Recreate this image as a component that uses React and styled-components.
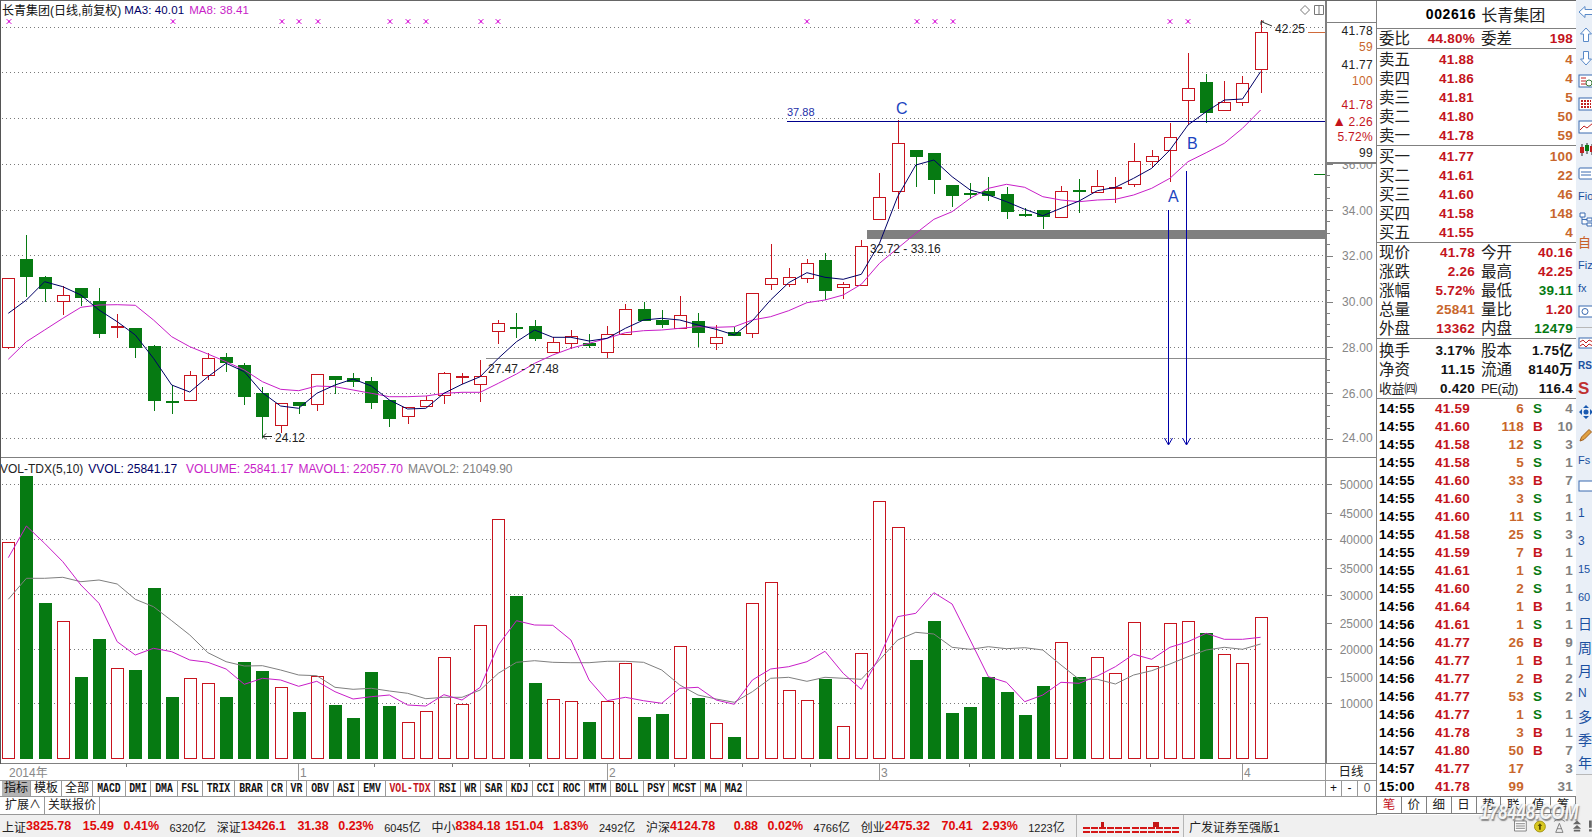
import styled, { createGlobalStyle } from "styled-components";

const SANS = `"Liberation Sans", "Noto Sans CJK SC", sans-serif`;

const GlobalStyle = createGlobalStyle`
  html, body {
    margin: 0;
    background: #fff;
    overflow: hidden;
  }
  * {
    box-sizing: border-box;
  }
`;

const RED = "#c4141c";
const ORANGE = "#c8662c";
const GREEN = "#067a12";
const NAVY = "#000066";
const MAGENTA = "#c81ec8";
const GRAY = "#808080";

const toY = (base, list) => list.map((v) => base + v / 3);
const barX = (i) => 8.3 + 18.15 * i;

// [type, wick top, body top, body bottom, wick bottom], read off the picture in 3x units
const scaleCandles = (base, rows) =>
  rows.map(([type, wt, bt, bb, wb]) => ({
    type,
    wt: base + wt / 3,
    bt: base + bt / 3,
    bb: base + bb / 3,
    wb: base + wb / 3,
  }));

const candles = [
  ...scaleCandles(230, [
    ["r", 145, 145, 353, 356], ["g", 15, 87, 137, 200], ["g", 138, 141, 173, 215],
    ["r", 168, 196, 214, 255], ["g", 174, 174, 200, 228], ["g", 174, 213, 308, 323],
    ["r", 252, 288, 292, 323], ["g", 294, 294, 351, 383], ["g", 345, 348, 509, 543],
    ["g", 465, 513, 515, 551], ["r", 424, 436, 512, 512], ["r", 370, 385, 437, 450],
    ["g", 370, 381, 396, 425], ["g", 400, 405, 497, 525], ["g", 472, 489, 557, 625],
    ["r", 520, 520, 586, 608], ["g", 515, 516, 524, 551], ["r", 433, 433, 523, 542],
    ["g", 438, 438, 446, 493], ["g", 430, 445, 453, 470], ["g", 441, 453, 515, 536],
    ["g", 510, 510, 563, 590], ["r", 530, 532, 559, 581], ["r", 497, 511, 529, 530],
    ["r", 425, 430, 496, 521], ["r", 430, 438, 442, 462], ["r", 390, 439, 463, 515],
    ["r", 270, 280, 304, 341], ["g", 250, 291, 293, 325],
  ]),
  ...scaleCandles(100, [
    ["g", 660, 678, 714, 722], ["r", 710, 727, 758, 758], ["r", 690, 707, 728, 748],
    ["g", 703, 730, 735, 745], ["r", 678, 703, 757, 775], ["r", 613, 628, 704, 704],
    ["g", 605, 628, 660, 660], ["g", 630, 660, 671, 685], ["r", 588, 646, 686, 688],
    ["g", 640, 663, 695, 742], ["r", 675, 710, 727, 750], ["g", 680, 696, 704, 707],
    ["r", 580, 580, 700, 714], ["r", 432, 535, 553, 570], ["r", 505, 530, 550, 560],
    ["r", 478, 490, 536, 550], ["g", 460, 481, 572, 600], ["r", 545, 553, 562, 596],
    ["r", 420, 439, 556, 556], ["r", 220, 292, 358, 358], ["r", 60, 130, 274, 326],
    ["g", 150, 150, 167, 260], ["g", 160, 160, 239, 282], ["g", 256, 256, 287, 320],
    ["g", 250, 279, 281, 296], ["g", 232, 273, 285, 302], ["g", 262, 283, 335, 356],
    ["g", 324, 342, 344, 350], ["g", 330, 331, 350, 386], ["r", 258, 274, 352, 352],
    ["g", 238, 270, 272, 338], ["r", 210, 257, 275, 275], ["r", 232, 262, 265, 308],
    ["r", 128, 184, 254, 260], ["r", 150, 169, 184, 205], ["r", 70, 112, 152, 245],
  ]),
  ...scaleCandles(0, [
    ["r", 158, 263, 298, 375], ["g", 222, 246, 335, 368], ["r", 243, 307, 332, 332],
    ["r", 228, 250, 308, 318], ["r", 60, 97, 208, 278],
  ]),
];

const ma3 = [
  ...toY(230, [250, 210, 155, 170, 195, 240, 275, 315, 385, 465, 486, 440, 400, 425, 488, 528, 535, 490, 465, 447, 468, 510, 537, 535, 490, 463, 440, 385, 335]),
  ...toY(100, [690, 712, 712, 723, 715, 685, 660, 655, 660, 675, 688, 705, 662, 600, 548, 518, 532, 538, 523, 430, 290, 195, 180, 230, 270, 285, 305, 328, 347, 325, 303, 272, 262, 235, 205, 150]),
  ...toY(0, [375, 335, 300, 297, 215]),
];

const ma8 = [
  ...toY(230, [388, 335, 300, 265, 232, 225, 224, 226, 270, 320, 350, 372, 395, 420, 455, 478, 482, 468, 470, 480, 490, 500, 500, 498, 490, 487, 487, 460, 432]),
  ...toY(100, [790, 765, 745, 730, 715, 698, 692, 690, 685, 680, 682, 680, 660, 650, 632, 608, 600, 585, 553, 490, 445, 400, 358, 335, 295, 265, 253, 262, 290, 300, 305, 300, 298, 285, 265, 235, 185, 158, 130, 85, 30]),
];

const volumes = [
  ["r", 247], ["g", 48], ["g", 429], ["r", 484], ["g", 651], ["g", 537], ["r", 625], ["g", 630], ["g", 384], ["g", 711],
  ["r", 655], ["r", 670], ["g", 711], ["g", 606], ["g", 633], ["r", 682], ["g", 756], ["r", 649], ["g", 735], ["g", 774],
  ["g", 636], ["g", 738], ["r", 787], ["r", 754], ["r", 592], ["r", 733], ["r", 496], ["r", 178], ["g", 408], ["g", 669],
  ["r", 718], ["r", 724], ["g", 786], ["r", 724], ["r", 610], ["g", 771], ["g", 762], ["r", 559], ["g", 714], ["r", 790],
  ["g", 831], ["r", 430], ["r", 367], ["r", 691], ["r", 721], ["g", 656], ["r", 799], ["r", 580], ["r", 124], ["r", 202],
  ["g", 600], ["g", 483], ["g", 759], ["g", 741], ["g", 651], ["g", 696], ["g", 765], ["g", 678], ["r", 547], ["g", 651],
  ["r", 592], ["r", 640], ["r", 487], ["r", 619], ["r", 490], ["r", 484], ["g", 519], ["r", 583], ["r", 610], ["r", 472],
];

const mavol1 = toY(460, [293, 198, 250, 305, 375, 430, 545, 585, 565, 575, 600, 607, 627, 673, 655, 660, 679, 664, 695, 717, 710, 705, 735, 738, 704, 720, 682, 555, 482, 495, 496, 540, 660, 722, 712, 722, 730, 685, 682, 720, 733, 660, 627, 620, 605, 574, 640, 688, 590, 470, 460, 398, 432, 540, 650, 667, 725, 705, 667, 670, 648, 620, 583, 598, 562, 545, 520, 538, 538, 532]);
const mavol2 = toY(460, [418, 355, 355, 352, 365, 360, 372, 418, 440, 482, 525, 578, 605, 618, 617, 630, 645, 647, 682, 688, 685, 693, 700, 716, 712, 712, 690, 640, 607, 602, 607, 608, 608, 604, 604, 607, 630, 675, 705, 717, 727, 695, 655, 652, 664, 652, 655, 658, 600, 540, 517, 522, 562, 568, 560, 566, 563, 570, 615, 658, 658, 672, 645, 632, 612, 590, 570, 562, 568, 552]);

const mainGrid = [27.5, 72.5, 118.5, 164.5, 210.5, 255.5, 301.5, 347.5, 393.5, 438.5];
const volGrid = [484.5, 539.5, 594.5, 649.5, 703.5];
const markX = [9, 173, 282, 299, 318, 390, 408, 426, 481, 498, 807, 917, 935, 953, 1170, 1188];

const priceLabels = [
  ["36.00", 164], ["34.00", 210], ["32.00", 255], ["30.00", 301], ["28.00", 347], ["26.00", 393], ["24.00", 437],
];
const volLabels = [
  ["50000", 484], ["45000", 513], ["40000", 539], ["35000", 568], ["30000", 595], ["25000", 623], ["20000", 649], ["15000", 677], ["10000", 703],
];

const tabs = [
  ["指标", 29, "cjk", "active"], ["模板", 31, "cjk"], ["全部", 31, "cjk"], ["MACD", 33], ["DMI", 25], ["DMA", 27], ["FSL", 25],
  ["TRIX", 32], ["BRAR", 33], ["CR", 19], ["VR", 20], ["OBV", 27], ["ASI", 25], ["EMV", 27], ["VOL-TDX", 49, "mono", "hot"],
  ["RSI", 26], ["WR", 20], ["SAR", 26], ["KDJ", 26], ["CCI", 26], ["ROC", 26], ["MTM", 26], ["BOLL", 33], ["PSY", 25],
  ["MCST", 32], ["MA", 20], ["MA2", 26],
];

const indexes = [
  ["上证", "3825.78", "15.49", "0.41%", "6320"],
  ["深证", "13426.1", "31.38", "0.23%", "6045"],
  ["中小", "8384.18", "151.04", "1.83%", "2492"],
  ["沪深", "4124.78", "0.88", "0.02%", "4766"],
  ["创业", "2475.32", "70.41", "2.93%", "1223"],
];

const sells = [["卖五", "41.88", "4"], ["卖四", "41.86", "4"], ["卖三", "41.81", "5"], ["卖二", "41.80", "50"], ["卖一", "41.78", "59"]];
const buys = [["买一", "41.77", "100"], ["买二", "41.61", "22"], ["买三", "41.60", "46"], ["买四", "41.58", "148"], ["买五", "41.55", "4"]];

const stats = [
  ["现价", "41.78", RED, "今开", "40.16", RED],
  ["涨跌", "2.26", RED, "最高", "42.25", RED],
  ["涨幅", "5.72%", RED, "最低", "39.11", GREEN],
  ["总量", "25841", ORANGE, "量比", "1.20", RED],
  ["外盘", "13362", RED, "内盘", "12479", GREEN],
];
const finance = [
  ["换手", "3.17%", "股本", "1.75亿"],
  ["净资", "11.15", "流通", "8140万"],
  ["收益㈣", "0.420", "PE(动)", "116.4"],
];

const trades = [
  ["14:55", "41.59", "6", "S", "4"], ["14:55", "41.60", "118", "B", "10"], ["14:55", "41.58", "12", "S", "3"],
  ["14:55", "41.58", "5", "S", "1"], ["14:55", "41.60", "33", "B", "7"], ["14:55", "41.60", "3", "S", "1"],
  ["14:55", "41.60", "11", "S", "1"], ["14:55", "41.58", "25", "S", "3"], ["14:55", "41.59", "7", "B", "1"],
  ["14:55", "41.61", "1", "S", "1"], ["14:55", "41.60", "2", "S", "1"], ["14:56", "41.64", "1", "B", "1"],
  ["14:56", "41.61", "1", "S", "1"], ["14:56", "41.77", "26", "B", "9"], ["14:56", "41.77", "1", "B", "1"],
  ["14:56", "41.77", "2", "B", "2"], ["14:56", "41.77", "53", "S", "2"], ["14:56", "41.77", "1", "S", "1"],
  ["14:56", "41.78", "3", "B", "1"], ["14:57", "41.80", "50", "B", "7"], ["14:57", "41.77", "17", "", "3"],
  ["15:00", "41.78", "99", "", "31"],
];

const Page = styled.div`
  position: relative;
  width: 1592px;
  height: 837px;
  overflow: hidden;
  display: flex;
  flex-direction: column;
  font-family: ${SANS};
  background: #fff;

  &::before {
    content: "";
    position: absolute;
    left: 0;
    top: 0;
    right: 16px;
    height: 1px;
    background: #666;
    z-index: 3;
  }

  &::after {
    content: "";
    position: absolute;
    left: 0;
    top: 0;
    width: 1px;
    height: 764px;
    background: #555;
    z-index: 3;
  }
`;

const Workspace = styled.div`
  display: flex;
  height: 815px;
`;

const LeftColumn = styled.div`
  width: 1377px;
  display: flex;
  flex-direction: column;
  border-right: 1px solid ${GRAY};
`;

const Panel = styled.div`
  position: relative;
  display: flex;
  height: ${(p) => p.$height}px;
  border-bottom: 1px solid ${GRAY};
`;

const ChartSvg = styled.svg`
  display: block;
  flex: none;
  font-family: "Liberation Sans", sans-serif;
  font-size: 12px;
`;

const Axis = styled.div`
  position: relative;
  flex: 1;
  border-left: 2px solid ${GRAY};
`;

const AxisSvg = styled.svg`
  display: block;
  font-family: "Liberation Sans", sans-serif;
  font-size: 12px;
`;

const QuoteBox = styled.div`
  position: absolute;
  left: 0;
  right: 0;
  top: 22px;
  height: 142px;
  background: #fff;
  border-top: 1px solid ${GRAY};
  border-bottom: 2px solid ${GRAY};
`;

const QuoteValue = styled.div`
  height: 16px;
  line-height: 16px;
  margin-top: ${(p) => p.$gap || 0}px;
  padding-right: 3px;
  text-align: right;
  font-size: 12px;
  letter-spacing: 0.3px;
  white-space: nowrap;
  color: ${(p) => p.$color};
`;

const Triangle = styled.span`
  font-size: 14px;
  margin-right: 2px;
`;

const TitleBar = styled.div`
  position: absolute;
  left: ${(p) => p.$left}px;
  top: 1px;
  width: 1323px;
  height: 17px;
  display: flex;
  align-items: center;
  font-size: 11.5px;
`;

const TitleName = styled.span`
  font-size: 12px;
  color: #111;
  margin-right: 3px;
`;

const TitleValue = styled.span`
  color: ${(p) => p.$color};
  margin-right: ${(p) => p.$gap || 0}px;
  letter-spacing: 0.1px;
`;

const WindowIcons = styled.div`
  margin-left: auto;
  display: flex;
  align-items: center;
  gap: 4px;
  padding-right: 1px;
`;

const VolTitle = styled(TitleBar)`
  top: 2px;
  font-size: 12px;
`;

const VolValue = styled.span`
  position: relative;
  color: ${(p) => p.$color};
  margin-right: ${(p) => p.$gap}px;
  white-space: nowrap;
`;

const TimeRow = styled.div`
  display: flex;
  height: 17px;
  border-bottom: 1px solid #999;
`;

const DayCell = styled.div`
  flex: 1;
  border-left: 1px solid #999;
  text-align: center;
  font-size: 12.5px;
  line-height: 16px;
  color: #222;
`;

const ButtonRow = styled.div`
  display: flex;
  justify-content: space-between;
  height: 16px;
  border-bottom: 1px solid #999;
`;

const TabList = styled.div`
  display: flex;
  padding-left: 2px;
`;

const Tab = styled.div`
  flex: none;
  width: ${(p) => p.$w}px;
  border-right: 1px solid #999;
  text-align: center;
  overflow: hidden;
  white-space: nowrap;
  line-height: 15px;
  font-family: ${(p) => (p.$kind === "cjk" ? SANS : `"Liberation Mono", monospace`)};
  font-size: ${(p) => (p.$kind === "cjk" ? 12 : 9.8)}px;
  font-weight: ${(p) => (p.$kind === "cjk" ? 400 : 700)};
  color: ${(p) => (p.$tone === "hot" ? RED : "#111")};
  background: ${(p) => (p.$tone === "active" ? "#b4b4b4" : "transparent")};
`;

const TabText = styled.span`
  display: inline-block;
  transform: ${(p) => (p.$kind === "cjk" ? "none" : "scaleY(1.25)")};
`;

const ZoomButtons = styled.div`
  display: flex;
  width: 51px;
  flex: none;
`;

const ZoomButton = styled.div`
  width: ${(p) => p.$w}px;
  flex: none;
  border-left: 1px solid #999;
  text-align: center;
  line-height: 15px;
  font-size: 12px;
  color: ${(p) => p.$color || "#111"};
`;

const ExtraRow = styled.div`
  display: flex;
  height: 18px;
  padding-left: 2px;
  border-bottom: 1px solid #999;
`;

const ExtraTab = styled.div`
  width: ${(p) => p.$w}px;
  border-right: 1px solid #999;
  text-align: center;
  font-size: 12px;
  line-height: 17px;
  color: #222;
`;

const QuoteColumn = styled.div`
  width: 199px;
  flex: none;
  display: flex;
  flex-direction: column;
`;

const Heading = styled.div`
  height: 29px;
  padding-left: 18px;
  display: flex;
  align-items: center;
  justify-content: center;
  gap: 5px;
  border-bottom: 1px solid ${GRAY};
`;

const HeadingCode = styled.span`
  font-size: 14px;
  font-weight: 700;
  letter-spacing: 0.6px;
  color: #000;
`;

const HeadingName = styled.span`
  font-size: 16px;
  color: #222;
`;

const Section = styled.div`
  padding-top: ${(p) => p.$top || 0}px;
  height: ${(p) => p.$height}px;
  border-bottom: 1px solid ${GRAY};
`;

const PairRow = styled.div`
  display: grid;
  grid-template-columns: 32px 64px 6px 32px 1fr;
  align-items: center;
  height: 19px;
  padding: 0 3px 0 2px;
`;

const LevelRow = styled.div`
  display: grid;
  grid-template-columns: 60px 36px 1fr;
  align-items: center;
  height: 19px;
  padding: 0 3px 0 2px;
`;

const Label = styled.span`
  font-size: 15.5px;
  line-height: 19px;
  color: #222;
  white-space: nowrap;
  grid-column: ${(p) => p.$col || "auto"};
`;

const Num = styled.span`
  font-size: 13.5px;
  line-height: 19px;
  font-weight: 700;
  letter-spacing: 0.25px;
  white-space: nowrap;
  text-align: ${(p) => p.$align || "right"};
  color: ${(p) => p.$color || "#111"};
  grid-column: ${(p) => p.$col || "auto"};
`;

const SmallLabel = styled(Label)`
  font-size: 13px;
  letter-spacing: -0.4px;
`;

const TradeList = styled.div`
  flex: none;
  height: 397px;
  padding-top: 0;
`;

const TradeRow = styled.div`
  display: grid;
  grid-template-columns: 56px 36px 53px 24px 1fr;
  align-items: center;
  height: 18px;
  padding: 0 3px 0 2px;
`;

const TradeFlag = styled(Num)`
  padding-left: 9px;
  text-align: left;
`;

const QuoteTabs = styled.div`
  display: flex;
  height: 18px;
  border-top: 1px solid ${GRAY};
  border-bottom: 1px solid ${GRAY};
  width: 199px;
`;

const QuoteTab = styled.div`
  flex: 1;
  border-right: 1px solid ${GRAY};
  text-align: center;
  font-size: 12.5px;
  line-height: 16px;
  color: ${(p) => (p.$active ? RED : "#222")};
`;

const ToolColumn = styled.div`
  width: 16px;
  flex: none;
  overflow: hidden;
  background: #f0f0f0;
`;

const ToolStack = styled.div`
  background: #e9eff7;
  padding-bottom: 1px;
  border-bottom: 1px solid #b8b8b8;
`;

const ToolSlot = styled.div`
  height: ${(p) => p.$h || 23}px;
  display: flex;
  align-items: center;
  padding-left: 2px;
  white-space: nowrap;
  font-size: ${(p) => p.$size || 13}px;
  font-weight: ${(p) => p.$weight || 400};
  color: ${(p) => p.$color || "#1a4fa0"};
`;

const ToolDivider = styled.div`
  height: ${(p) => p.$h}px;
  position: relative;

  &::after {
    content: "";
    position: absolute;
    left: 0;
    right: 0;
    top: 50%;
    height: 1px;
    background: #b8b8b8;
  }
`;

const StatusBar = styled.div`
  position: relative;
  display: flex;
  align-items: center;
  height: 22px;
  background: #f0f0f0;
`;

const IndexGroup = styled.div`
  flex: none;
  width: 214.7px;
  padding-left: 2px;
  display: grid;
  grid-template-columns: 24px 46px 42px 45px 47px;
  align-items: center;
`;

const IndexName = styled.span`
  font-size: 12px;
  color: #222;
  white-space: nowrap;
`;

const IndexNum = styled.span`
  font-size: 12.5px;
  font-weight: 700;
  color: #e00a0a;
  text-align: ${(p) => p.$align || "right"};
  white-space: nowrap;
`;

const IndexAmount = styled.span`
  font-size: 11px;
  color: #222;
  text-align: right;
  white-space: nowrap;
`;

const AmountUnit = styled.span`
  font-size: 12px;
`;

const Meter = styled.div`
  display: flex;
  height: 22px;
  margin-left: 2.5px;
  padding: 0 3px 0 5px;
  border-left: 1px solid #b5b5b5;
  border-right: 1px solid #b5b5b5;
`;

const Broker = styled.div`
  margin-left: 5px;
  font-size: 12px;
  color: #222;
  white-space: nowrap;
`;

const StatusIcons = styled.div`
  margin-left: auto;
  display: flex;
  align-items: center;
  gap: 7px;
  padding-right: 0;
  width: 78px;
`;

const Watermark = styled.div`
  position: absolute;
  left: 1480px;
  top: 799px;
  font-family: "Liberation Sans", sans-serif;
  font-size: 16.5px;
  font-weight: 700;
  font-style: italic;
  color: rgba(255, 255, 255, 0.92);
  text-shadow: 1px 1px 1px rgba(110, 110, 110, 0.8), -1px 0 1px rgba(140, 140, 140, 0.6);
  transform: scaleY(1.35);
  transform-origin: 0 0;
  z-index: 4;
`;

const polyPoints = (list) => list.map((y, i) => `${barX(i).toFixed(1)},${y.toFixed(1)}`).join(" ");

const Dotted = ({ y }) => (
  <line x1="2" x2="1325" y1={y} y2={y} stroke="#7a7a7a" strokeDasharray="1 3" shapeRendering="crispEdges" />
);

const Candle = ({ c, i }) => {
  const x = Math.round(barX(i)) + 0.5;
  const color = c.type === "r" ? "#c8141e" : "#067a12";
  const height = Math.max(c.bb - c.bt, 1);
  const solid = c.type === "g" || height < 2;
  return (
    <g shapeRendering="crispEdges">
      <line x1={x} x2={x} y1={c.wt} y2={c.bt} stroke={color} />
      <line x1={x} x2={x} y1={c.bt + height} y2={c.wb} stroke={color} />
      <rect
        x={x - 6}
        y={Math.round(c.bt) + 0.5}
        width={12}
        height={Math.round(height)}
        fill={solid ? color : "#fff"}
        stroke={color}
      />
    </g>
  );
};

const VolumeBar = ({ type, top, i }) => {
  const x = Math.round(barX(i)) - 6;
  const y = Math.round(460 + top / 3);
  const color = type === "r" ? "#c8141e" : "#067a12";
  return (
    <rect
      x={x + 0.5}
      y={y + 0.5}
      width={12}
      height={758 - y}
      fill={type === "r" ? "#fff" : color}
      stroke={color}
      shapeRendering="crispEdges"
    />
  );
};

const Mark = ({ x }) => (
  <g stroke="#d81ed8" strokeWidth="1">
    <line x1={x - 2.5} x2={x + 2.5} y1={19} y2={24} />
    <line x1={x - 2.5} x2={x + 2.5} y1={24} y2={19} />
    <rect x={x - 1} y={20.5} width="2" height="2" fill="#d81ed8" stroke="none" />
  </g>
);

const Annotation = ({ x, y, children, color = "#222", size = 12 }) => (
  <text x={x} y={y} fill={color} fontSize={size} dominantBaseline="middle">
    {children}
  </text>
);

const MainChart = () => (
  <ChartSvg width="1325" height="457" viewBox="0 0 1325 457">
    {mainGrid.map((y) => (
      <Dotted key={y} y={y} />
    ))}
    {markX.map((x) => (
      <Mark key={x} x={x} />
    ))}
    <line x1="486" x2="1325" y1="358.5" y2="358.5" stroke="#8c8c8c" shapeRendering="crispEdges" />
    <rect x="867" y="230" width="458" height="9" fill="#808080" />
    {candles.map((c, i) => (
      <Candle key={i} c={c} i={i} />
    ))}
    <polyline points={polyPoints(ma8)} fill="none" stroke={MAGENTA} />
    <polyline points={polyPoints(ma3)} fill="none" stroke={NAVY} />
    <line x1="787" x2="1325" y1="121.5" y2="121.5" stroke="#00008c" shapeRendering="crispEdges" />
    <Annotation x={787} y={113} color="#1c2fa8" size={11}>37.88</Annotation>
    <Annotation x={896} y={110} color="#1c44c0" size={16}>C</Annotation>
    <Annotation x={1187} y={145} color="#1c44c0" size={16}>B</Annotation>
    <Annotation x={1168} y={198} color="#1c44c0" size={16}>A</Annotation>
    <Annotation x={870} y={250}>32.72 - 33.16</Annotation>
    <Annotation x={488} y={370}>27.47 - 27.48</Annotation>
    <Annotation x={275} y={439}>24.12</Annotation>
    <Annotation x={1275} y={29.5}>42.25</Annotation>
    <path d="M272 436.5H263M266 433.5L263 436.5L266 439.5" fill="none" stroke="#222" />
    <path d="M1272 26L1261 21.5L1261 25M1261 21.5L1264 21" fill="none" stroke="#333" />
    <line x1="1308" x2="1325" y1="32.5" y2="32.5" stroke="#d06a3a" shapeRendering="crispEdges" />
    <line x1="1314" x2="1325" y1="174.5" y2="174.5" stroke={GREEN} shapeRendering="crispEdges" />
    <g stroke="#0000a8" fill="none">
      <path d="M1168.5 210V444M1164.5 438L1168.5 445L1172.5 438" />
      <path d="M1186.5 171V444M1182.5 438L1186.5 445L1190.5 438" />
    </g>
  </ChartSvg>
);

const VolumeChart = () => (
  <ChartSvg width="1325" height="305" viewBox="0 458 1325 305">
    {volGrid.map((y) => (
      <Dotted key={y} y={y} />
    ))}
    {volumes.map(([type, top], i) => (
      <VolumeBar key={i} type={type} top={top} i={i} />
    ))}
    <polyline points={polyPoints(mavol2)} fill="none" stroke="#7f7f7f" />
    <polyline points={polyPoints(mavol1)} fill="none" stroke={MAGENTA} />
  </ChartSvg>
);

const TimeAxis = () => (
  <ChartSvg width="1325" height="16" viewBox="0 764 1325 16">
    {[298, 607, 879, 1242].map((x) => (
      <line key={x} x1={x + 0.5} x2={x + 0.5} y1="764" y2="780" stroke="#999" />
    ))}
    {[126, 374, 452, 529, 674, 742, 810, 969, 1060, 1150].map((x) => (
      <line key={x} x1={x + 0.5} x2={x + 0.5} y1="764" y2="767" stroke="#777" />
    ))}
    <text x="9" y="777" fill="#888" fontFamily={SANS} fontSize="12">2014年</text>
    <text x="300" y="777" fill="#888">1</text>
    <text x="609" y="777" fill="#888">2</text>
    <text x="881" y="777" fill="#888">3</text>
    <text x="1244" y="777" fill="#888">4</text>
  </ChartSvg>
);

const PriceAxis = () => {
  const minor = Array.from({ length: 25 }, (_, i) => 164.5 + i * 11.46);
  return (
    <AxisSvg width="49" height="457" viewBox="0 0 49 457">
      {minor.map((y, i) => (
        <line key={y} x1="0" x2={i % 4 === 0 ? 6 : 3} y1={y} y2={y} stroke={GRAY} shapeRendering="crispEdges" />
      ))}
      {priceLabels.map(([text, y]) => (
        <text key={text} x="46" y={y + 2} textAnchor="end" dominantBaseline="middle" fill="#868686" letterSpacing="0.2">
          {text}
        </text>
      ))}
    </AxisSvg>
  );
};

const VolumeAxis = () => (
  <AxisSvg width="49" height="305" viewBox="0 458 49 305">
    {volLabels.map(([text, y]) => (
      <g key={text}>
        <line x1="0" x2="5" y1={y + 0.5} y2={y + 0.5} stroke={GRAY} shapeRendering="crispEdges" />
        <text x="46" y={y + 2} textAnchor="end" dominantBaseline="middle" fill="#868686">
          {text}
        </text>
      </g>
    ))}
  </AxisSvg>
);

const Glyph = ({ children }) => (
  <svg width="16" height="16" viewBox="0 0 16 16" fill="none" style={{ flex: "none" }}>
    {children}
  </svg>
);

const toolTop = [
  <path key="a" d="M1 8L7 2.5V5.5H15V10.5H7V13.5Z" stroke="#5a8ac8" fill="#fff" />,
  <path key="b" d="M8 1L13.5 7H10.5V14.5H5.5V7H2.5Z" stroke="#5a8ac8" fill="#fff" />,
  <path key="c" d="M8 15L13.5 9H10.5V1.5H5.5V9H2.5Z" stroke="#5a8ac8" fill="#fff" />,
  <g key="d"><rect x="1" y="2" width="14" height="12" stroke="#3a6ab0" fill="#fff" /><path d="M3 5H8M3 8H8M3 11H8" stroke="#c02020" /><circle cx="11" cy="10" r="3" stroke="#3a7a3a" /></g>,
  <g key="e"><rect x="1" y="2" width="14" height="12" stroke="#3a6ab0" fill="#fff" /><path d="M3 5H13M3 8H13M3 11H13" stroke="#c02020" strokeDasharray="2 1" strokeWidth="2" /></g>,
  <g key="f"><rect x="1" y="2" width="14" height="12" stroke="#3a6ab0" fill="#fff" /><path d="M2 11L6 7L9 9L15 4" stroke="#c02020" /></g>,
  <g key="g"><path d="M4 2V14M9 1V12M14 2V13" stroke="#222" /><rect x="2" y="5" width="4" height="6" fill="#c02020" /><rect x="7" y="3" width="4" height="6" fill="#067a12" /><rect x="12" y="4" width="4" height="6" fill="#c02020" /></g>,
  <g key="h"><rect x="1" y="3" width="14" height="11" rx="1" stroke="#3a6ab0" fill="#fff" /><path d="M3 7H13M3 10H13" stroke="#3a6ab0" /></g>,
];

const ToolColumnContent = () => (
  <ToolColumn>
    <ToolStack>
      {toolTop.map((g, i) => (
        <ToolSlot key={i}><Glyph>{g}</Glyph></ToolSlot>
      ))}
      <ToolSlot $size={11}>Fio</ToolSlot>
      <ToolSlot><Glyph><path d="M2 2H7V6H2ZM9 7H14V10H9ZM9 12H14V15H9ZM4 6V13H9M4 8.5H9" stroke="#3a6ab0" fill="#fff" /></Glyph></ToolSlot>
      <ToolSlot $size={13} $color="#c8602a">自</ToolSlot>
      <ToolSlot $size={11}>Fiz</ToolSlot>
      <ToolSlot $size={11}>fx</ToolSlot>
      <ToolSlot><Glyph><rect x="1" y="3" width="14" height="11" stroke="#3a6ab0" fill="#fff" /><circle cx="7" cy="8.5" r="3" stroke="#3a6ab0" /></Glyph></ToolSlot>
      <ToolDivider $h={9} />
      <ToolSlot $h={23}><Glyph><rect x="1" y="3" width="14" height="10" stroke="#3a6ab0" fill="#fff" /><path d="M2 7L5 5L8 8L11 5L15 7M2 11L5 9L8 12L11 9L15 11" stroke="#c02020" /></Glyph></ToolSlot>
      <ToolSlot $size={10} $weight={700}>RS</ToolSlot>
      <ToolSlot $size={17} $weight={700} $color="#c03030">S</ToolSlot>
      <ToolSlot><Glyph><path d="M8 1L11 4H5ZM8 15L11 12H5ZM1 8L4 5V11ZM15 8L12 5V11Z" fill="#1a5ab0" /><circle cx="8" cy="8" r="2.5" fill="#1a5ab0" /></Glyph></ToolSlot>
      <ToolSlot><Glyph><path d="M2 14L3.5 10L11 2.5L13.5 5L6 12.5Z" fill="#e0a040" stroke="#a06020" /></Glyph></ToolSlot>
      <ToolSlot $h={27} $size={11}>Fs</ToolSlot>
      <ToolSlot $h={26}><Glyph><rect x="1" y="3" width="14" height="10" stroke="#3a6ab0" fill="#fff" /></Glyph></ToolSlot>
      <ToolSlot $h={28} $size={12}>1</ToolSlot>
      <ToolSlot $h={28} $size={12}>3</ToolSlot>
      <ToolSlot $h={28} $size={11}>15</ToolSlot>
      <ToolSlot $h={28} $size={11}>60</ToolSlot>
      <ToolSlot $h={24} $size={14}>日</ToolSlot>
      <ToolSlot $size={14}>周</ToolSlot>
      <ToolSlot $size={14}>月</ToolSlot>
      <ToolSlot $size={12}>N</ToolSlot>
      <ToolSlot $size={14}>多</ToolSlot>
      <ToolSlot $size={14}>季</ToolSlot>
      <ToolSlot $size={14}>年</ToolSlot>
    </ToolStack>
  </ToolColumn>
);

const QuotePanel = () => (
  <QuoteColumn>
    <Heading>
      <HeadingCode>002616</HeadingCode>
      <HeadingName>长青集团</HeadingName>
    </Heading>
    <Section $height={20}>
      <PairRow>
        <Label>委比</Label>
        <Num $color={RED}>44.80%</Num>
        <Label $col="4">委差</Label>
        <Num $color={RED}>198</Num>
      </PairRow>
    </Section>
    <Section $height={97} $top={1}>
      {sells.map(([name, price, vol]) => (
        <LevelRow key={name}>
          <Label>{name}</Label>
          <Num $color={RED} $align="left">{price}</Num>
          <Num $color={ORANGE}>{vol}</Num>
        </LevelRow>
      ))}
    </Section>
    <Section $height={97} $top={1}>
      {buys.map(([name, price, vol]) => (
        <LevelRow key={name}>
          <Label>{name}</Label>
          <Num $color={RED} $align="left">{price}</Num>
          <Num $color={ORANGE}>{vol}</Num>
        </LevelRow>
      ))}
    </Section>
    <Section $height={96} $top={0}>
      {stats.map(([a, av, ac, b, bv, bc]) => (
        <PairRow key={a}>
          <Label>{a}</Label>
          <Num $color={ac}>{av}</Num>
          <Label $col="4">{b}</Label>
          <Num $color={bc}>{bv}</Num>
        </PairRow>
      ))}
    </Section>
    <Section $height={60} $top={2}>
      {finance.map(([a, av, b, bv]) => (
        <PairRow key={a}>
          {a.length > 2 ? <SmallLabel>{a}</SmallLabel> : <Label>{a}</Label>}
          <Num>{av}</Num>
          {b.length > 2 ? <SmallLabel $col="4">{b}</SmallLabel> : <Label $col="4">{b}</Label>}
          <Num>{bv}</Num>
        </PairRow>
      ))}
    </Section>
    <TradeList>
      {trades.map(([time, price, vol, flag, count], i) => (
        <TradeRow key={i}>
          <Num $color="#000" $align="left">{time}</Num>
          <Num $color={RED} $align="left">{price}</Num>
          <Num $color={ORANGE}>{vol}</Num>
          <TradeFlag $color={flag === "B" ? RED : GREEN}>{flag}</TradeFlag>
          <Num $color="#808080">{count}</Num>
        </TradeRow>
      ))}
    </TradeList>
    <QuoteTabs>
      {["笔", "价", "细", "日", "势", "联", "值", "筹"].map((t, i) => (
        <QuoteTab key={t} $active={i === 0}>{t}</QuoteTab>
      ))}
    </QuoteTabs>
  </QuoteColumn>
);

const MeterGraphic = () => (
  <svg width="98" height="22" viewBox="0 0 98 22">
    {[0, 8, 16, 24, 32, 40].map((x) => (
      <g key={x} fill="#d41616">
        <rect x={x + 1} y="12" width="7" height="2" />
        <rect x={x + 1} y="16" width="7" height="2" />
        <rect x={x + 50} y="12" width="7" height="2" />
        <rect x={x + 50} y="16" width="7" height="2" />
      </g>
    ))}
    <rect x="19" y="7" width="3" height="5" fill="#c41616" />
    <rect x="71" y="7" width="6" height="5" fill="#c41616" />
  </svg>
);

const App = () => (
  <Page>
    <GlobalStyle />
    <Workspace>
      <LeftColumn>
        <Panel $height={458}>
          <MainChart />
          <Axis>
            <PriceAxis />
            <QuoteBox>
              <QuoteValue $color="#222">41.78</QuoteValue>
              <QuoteValue $color={ORANGE}>59</QuoteValue>
              <QuoteValue $color="#222" $gap={2}>41.77</QuoteValue>
              <QuoteValue $color={ORANGE}>100</QuoteValue>
              <QuoteValue $color={RED} $gap={8}>41.78</QuoteValue>
              <QuoteValue $color={RED}><Triangle>▲</Triangle>2.26</QuoteValue>
              <QuoteValue $color={RED}>5.72%</QuoteValue>
              <QuoteValue $color="#222">99</QuoteValue>
            </QuoteBox>
          </Axis>
          <TitleBar $left={2}>
            <TitleName>长青集团(日线,前复权)</TitleName>
            <TitleValue $color={NAVY} $gap={5}>MA3: 40.01</TitleValue>
            <TitleValue $color={MAGENTA}>MA8: 38.41</TitleValue>
            <WindowIcons>
              <svg width="10" height="10" viewBox="0 0 10 10">
                <path d="M5 .5L9.5 5L5 9.5L.5 5Z" fill="none" stroke="#777" />
              </svg>
              <svg width="10" height="10" viewBox="0 0 10 10">
                <path d="M.5.5H9.5V9.5H.5ZM5 .5V9.5" fill="none" stroke="#777" />
              </svg>
            </WindowIcons>
          </TitleBar>
        </Panel>
        <Panel $height={306}>
          <VolumeChart />
          <Axis>
            <VolumeAxis />
          </Axis>
          <VolTitle $left={0}>
            <VolValue $color="#222" $gap={5}>VOL-TDX(5,10)</VolValue>
            <VolValue $color={NAVY} $gap={9}>VVOL: 25841.17</VolValue>
            <VolValue $color={MAGENTA} $gap={5}>VOLUME: 25841.17</VolValue>
            <VolValue $color={MAGENTA} $gap={5}>MAVOL1: 22057.70</VolValue>
            <VolValue $color="#808080" $gap={0}>MAVOL2: 21049.90</VolValue>
          </VolTitle>
        </Panel>
        <TimeRow>
          <TimeAxis />
          <DayCell>日线</DayCell>
        </TimeRow>
        <ButtonRow>
          <TabList>
            {tabs.map(([label, w, kind = "mono", tone]) => (
              <Tab key={label} $w={w} $kind={kind} $tone={tone}>
                <TabText $kind={kind}>{label}</TabText>
              </Tab>
            ))}
          </TabList>
          <ZoomButtons>
            <ZoomButton $w={16}>+</ZoomButton>
            <ZoomButton $w={16}>-</ZoomButton>
            <ZoomButton $w={19} $color="#555">0</ZoomButton>
          </ZoomButtons>
        </ButtonRow>
        <ExtraRow>
          <ExtraTab $w={43}>扩展∧</ExtraTab>
          <ExtraTab $w={55}>关联报价</ExtraTab>
        </ExtraRow>
      </LeftColumn>
      <QuotePanel />
      <ToolColumnContent />
    </Workspace>
    <StatusBar>
      {indexes.map(([name, value, change, pct, amount]) => (
        <IndexGroup key={name}>
          <IndexName>{name}</IndexName>
          <IndexNum $align="left">{value}</IndexNum>
          <IndexNum>{change}</IndexNum>
          <IndexNum>{pct}</IndexNum>
          <IndexAmount>
            {amount}
            <AmountUnit>亿</AmountUnit>
          </IndexAmount>
        </IndexGroup>
      ))}
      <Meter>
        <MeterGraphic />
      </Meter>
      <Broker>广发证券至强版1</Broker>
      <StatusIcons>
        <svg width="14" height="12" viewBox="0 0 14 12">
          <path d="M.5.5H13.5V11.5H.5ZM2 3.5H12M2 6H12M2 8.5H12" fill="#fff" stroke="#777" />
        </svg>
        <svg width="13" height="13" viewBox="0 0 13 13">
          <circle cx="6.5" cy="6.5" r="6" fill="#d8c820" stroke="#a09010" />
          <path d="M6.5 3L9 6H4ZM5.5 6H7.5V10H5.5Z" fill="#5a5000" />
        </svg>
        <svg width="14" height="16" viewBox="0 0 14 16">
          <path d="M7 5L3 15H11ZM4.5 11H9.5M1 3Q7 -2 13 3" fill="none" stroke="#777" />
        </svg>
        <svg width="11" height="14" viewBox="0 0 11 14">
          <path d="M5.5 1L10 5H1ZM5.5 6L10 10H1ZM2 11H9V13H2Z" fill="#666" />
        </svg>
        <svg width="3" height="12" viewBox="0 0 3 12">
          <path d="M0 0H3V8H0ZM0 9.5H3V12H0Z" fill="#666" />
        </svg>
      </StatusIcons>
    </StatusBar>
    <Watermark>178448.COM</Watermark>
  </Page>
);

export default App;
